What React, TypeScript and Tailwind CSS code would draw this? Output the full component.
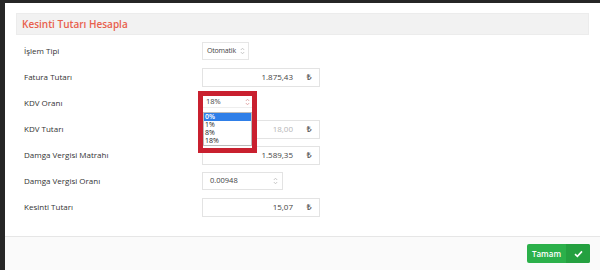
import React from "react";

const font = { fontFamily: '"Open Sans", "Noto Sans", sans-serif' };

function Arrows({ className = "" }: { className?: string }) {
  return (
    <svg width="5" height="8" viewBox="0 0 5 8" className={`shrink-0 ${className}`}>
      <path d="M0.8 3 L2.5 1.2 L4.2 3" fill="none" stroke="currentColor" strokeWidth="0.8" />
      <path d="M0.8 5 L2.5 6.8 L4.2 5" fill="none" stroke="currentColor" strokeWidth="0.8" />
    </svg>
  );
}

function Lira() {
  return <span className="text-[9px] text-[#666] font-semibold">₺</span>;
}

function MoneyInput({ value, disabled = false }: { value: string; disabled?: boolean }) {
  return (
    <div className="w-[118px] h-[19px] border border-[#e3e3e3] flex items-center bg-white">
      <div className={`flex-1 text-right text-[8px] pr-[6px] ${disabled ? "text-[#b5b5b5]" : "text-[#444]"}`}>{value}</div>
      <div className="w-[20px] flex justify-center"><Lira /></div>
    </div>
  );
}

function Row({ label, children }: { label: string; children?: React.ReactNode }) {
  return (
    <div className="h-[26px] flex items-center">
      <div className="w-[178px] text-[8px] text-[#333]">{label}</div>
      {children}
    </div>
  );
}

export default function App() {
  return (
    <div className="w-[600px] h-[270px] bg-[#262626] pl-[5px] pt-[3px] overflow-hidden" style={font}>
      <div className="bg-white h-full flex flex-col relative">
        <div className="flex-1 px-[11px] pt-[10px]">
          <div className="h-[22px] bg-[#f2f2f2] border border-[#ececec] flex items-center px-[5px]">
            <span className="text-[10px] font-semibold text-[#e8604c]">Kesinti Tutarı Hesapla</span>
          </div>
          <div className="pl-[8px] pt-[3px]">
            <Row label="İşlem Tipi">
              <div className="w-[47px] h-[18px] border border-[#e6e6e6] flex items-center justify-between pl-[4px] pr-[3px] text-[7px] tracking-[-0.2px] text-[#444] whitespace-nowrap">
                <span>Otomatik</span>
                <Arrows className="text-[#bbb]" />
              </div>
            </Row>
            <Row label="Fatura Tutarı">
              <MoneyInput value="1.875,43" />
            </Row>
            <Row label="KDV Oranı" />
            <Row label="KDV Tutarı">
              <MoneyInput value="18,00" disabled />
            </Row>
            <Row label="Damga Vergisi Matrahı">
              <MoneyInput value="1.589,35" />
            </Row>
            <Row label="Damga Vergisi Oranı">
              <div className="w-[81px] h-[18px] border border-[#e3e3e3] flex items-center justify-between pl-[7px] pr-[4px] text-[7.5px] text-[#444]">
                <span>0.00948</span>
                <Arrows className="text-[#bbb]" />
              </div>
            </Row>
            <Row label="Kesinti Tutarı">
              <MoneyInput value="15,07" />
            </Row>
          </div>
        </div>
        <div className="h-[34px] border-t border-[#e6e6e6] bg-[#fafafa] flex items-center justify-end pr-[10px]">
          <div className="h-[19px] w-[63px] flex rounded-[2px] overflow-hidden bg-[#2bb04a]">
            <div className="flex-1 flex items-center justify-center text-[8px] font-semibold text-white">Tamam</div>
            <div className="w-[24px] bg-[#24a040] flex items-center justify-center">
              <svg width="9" height="8" viewBox="0 0 9 8">
                <path d="M1 4.2 L3.4 6.4 L8 1.4" fill="none" stroke="white" strokeWidth="1.6" />
              </svg>
            </div>
          </div>
        </div>
        <div className="absolute left-[193px] top-[88px] w-[59px] h-[62px] border-[5px] border-[#c9202f] bg-white">
          <div className="h-[12px] flex items-center justify-between pl-[3px] pr-[2px] border-b border-[#eee] text-[7.5px] text-[#444]">
            <span>18%</span>
            <Arrows className="text-[#d99]" />
          </div>
          <div className="mt-[4px] border border-[#bbb] text-[7px] text-[#222]">
            <div className="h-[8px] leading-[8px] bg-[#2f7fe8] text-white font-semibold pl-[1px]">0%</div>
            <div className="h-[8px] leading-[8px] pl-[1px]">1%</div>
            <div className="h-[8px] leading-[8px] pl-[1px]">8%</div>
            <div className="h-[8px] leading-[8px] pl-[1px]">18%</div>
          </div>
        </div>
      </div>
    </div>
  );
}
